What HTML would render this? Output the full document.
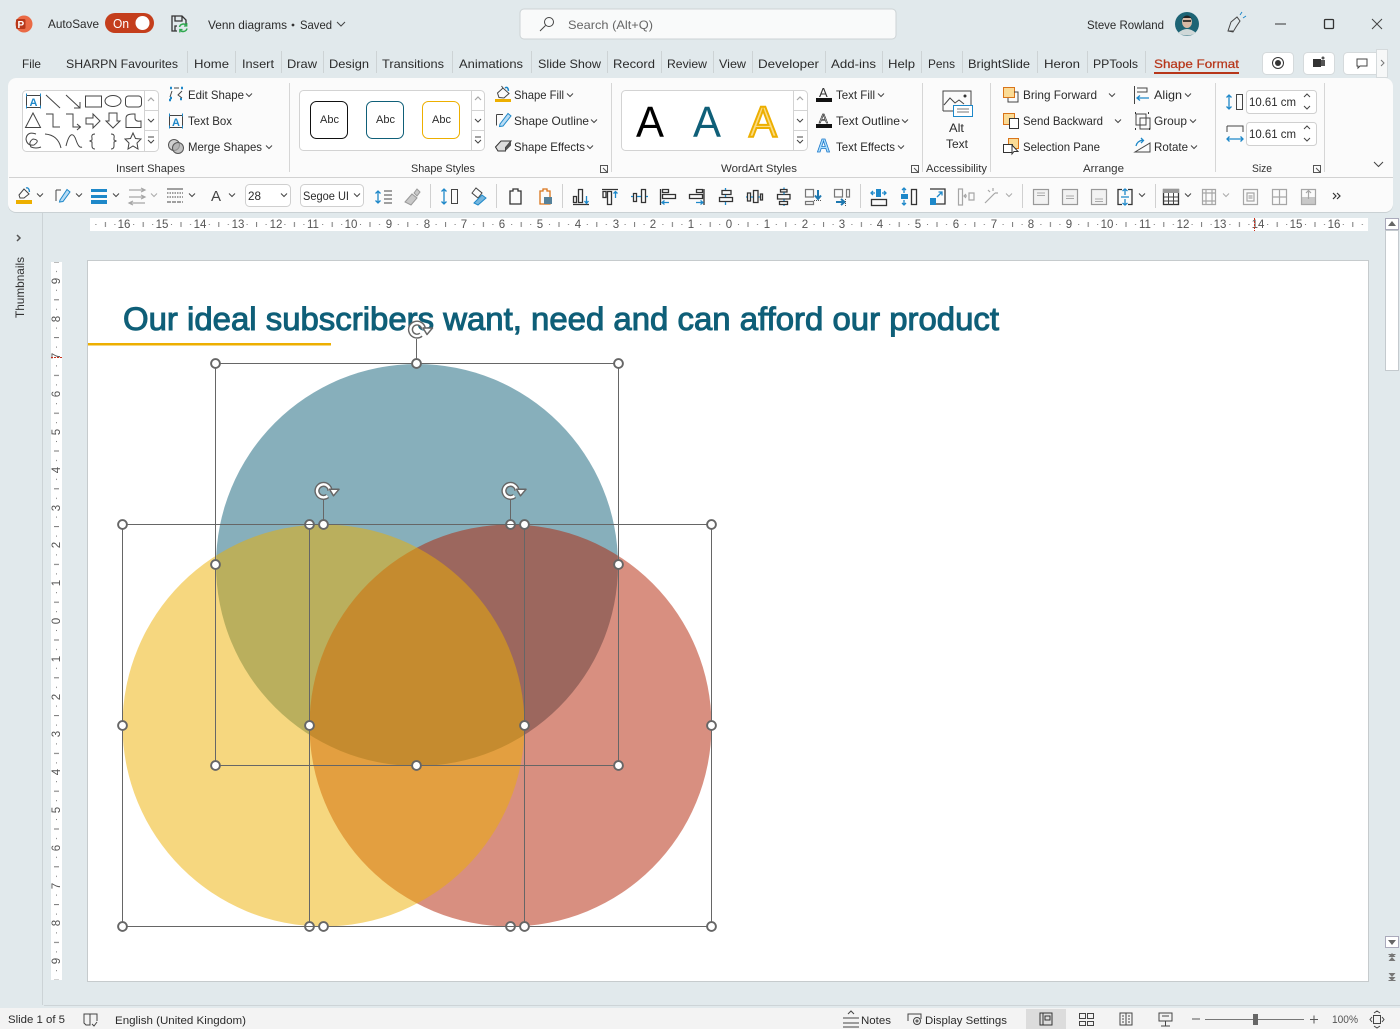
<!DOCTYPE html>
<html lang="en"><head><meta charset="utf-8"><title>Venn diagrams - PowerPoint</title>
<style>
html,body{margin:0;padding:0;width:1400px;height:1029px;overflow:hidden;background:#e1e9ec}
svg{display:block}
text{font-family:"Liberation Sans",sans-serif;font-size:12px;fill:#2b2b2b}
.k{fill:none;stroke:#444;stroke-width:1}
.b{fill:none;stroke:#1e88c9;stroke-width:1.3}
.g{fill:none;stroke:#a6a6a6;stroke-width:1.2}
.d{fill:none;stroke:#333;stroke-width:1.3}
.s{font-size:11px;fill:#333}
.r{font-size:11.5px;fill:#555}
.h{fill:#fff;stroke:#666;stroke-width:1.9}
.f{fill:none;stroke:#666;stroke-width:1}
</style></head><body>
<svg width="1400" height="1029" viewBox="0 0 1400 1029" xmlns="http://www.w3.org/2000/svg">
<defs>
<path id="c" d="M-3-1.5L0 1.5 3-1.5" fill="none" stroke="#444" stroke-width="1"/>
<path id="cg" d="M-3-1.5L0 1.5 3-1.5" fill="none" stroke="#aaa" stroke-width="1"/>
<g id="rot"><path d="M6.500 0A6.500 6.500 0 1 0 4 5.200" fill="none" stroke="#666" stroke-width="5.200"/><path d="M6.500 0A6.500 6.500 0 1 0 4 5.200" fill="none" stroke="#fff" stroke-width="2.400"/><path d="M6-1.500H15.500L10 5Z" fill="#fff" stroke="#666" stroke-width="1.500" stroke-linejoin="round"/></g>
<pattern id="hr" patternUnits="userSpaceOnUse" width="37.8" height="13" x="729" y="218"><rect x="9" y="6" width="1" height="1" fill="#777"/><rect x="18.5" y="4" width="1" height="5" fill="#777"/><rect x="28" y="6" width="1" height="1" fill="#777"/></pattern>
<pattern id="vr" patternUnits="userSpaceOnUse" width="11" height="37.8" x="51" y="621"><rect x="5" y="9" width="1" height="1" fill="#777"/><rect x="3" y="18.5" width="5" height="1" fill="#777"/><rect x="5" y="28" width="1" height="1" fill="#777"/></pattern>
</defs>

<rect width="1400" height="1029" fill="#e1e9ec"/>

<!-- title bar -->
<circle cx="24" cy="24" r="8.500" fill="#ea6a45"/><rect x="16" y="19" width="9.500" height="10" rx="1.500" fill="#b8381a"/><text x="17.500" y="28" style="font-size:10px;font-weight:bold;fill:#fff">P</text>
<text x="48" y="28" textLength="51" lengthAdjust="spacingAndGlyphs">AutoSave</text>
<rect x="105" y="13" width="49" height="20" rx="10" fill="#c43e1c"/><text x="113" y="28" textLength="16" lengthAdjust="spacingAndGlyphs" style="fill:#fff;font-size:13px">On</text><circle cx="142.500" cy="23" r="7" fill="#fff"/>
<path class="d" d="M177 31H172V16H182L186 20V25M175 16V21H182V16M175 31V26H177"/><path d="M179.500 27A4 4 0 0 1 186.500 25.500M187 28.500A4 4 0 0 1 180 30" fill="none" stroke="#2fa84f" stroke-width="1.500"/><path d="M186.800 23V26H184M179.800 32.500V29.500H182.500" fill="none" stroke="#2fa84f" stroke-width="1.200"/>
<text x="208" y="29" textLength="79" lengthAdjust="spacingAndGlyphs">Venn diagrams</text><circle cx="293" cy="25" r="1.400" fill="#333"/><text x="300" y="29" textLength="32" lengthAdjust="spacingAndGlyphs">Saved</text><path class="k" d="M337 22L341 26 345 22"/>
<rect x="520" y="9" width="376" height="30" rx="4" fill="#f9fafa" stroke="#cdd3d5"/>
<circle cx="549" cy="22" r="4.500" class="k"/><path class="k" d="M545.500 25.500L540 31"/>
<text x="568" y="29" textLength="85" lengthAdjust="spacingAndGlyphs" style="fill:#666">Search (Alt+Q)</text>
<text x="1087" y="29" textLength="77" lengthAdjust="spacingAndGlyphs">Steve Rowland</text>
<circle cx="1187" cy="24" r="12" fill="#1d6475"/><ellipse cx="1187" cy="22" rx="5" ry="6" fill="#d8b9a5"/><path d="M1181 20Q1187 11 1193 20L1191 18H1183Z" fill="#222"/><path d="M1178 33Q1187 25 1196 33Q1187 38 1178 33Z" fill="#cfd8d8"/><path d="M1183 21H1191" stroke="#111" stroke-width="1.500"/>
<path class="k" d="M1228 31L1231 22 1237 17 1240 21 1236 27 1233 32ZM1228 31H1233"/><path d="M1240 15L1242 12M1243 18L1246 16" stroke="#1e88c9" fill="none"/>
<path d="M1275 24H1286" stroke="#333"/><rect x="1324.500" y="19.500" width="9" height="9" rx="1" class="d"/><path d="M1372 19L1382 29M1382 19L1372 29" class="k"/>

<!-- tabs -->
<g>
<text x="22" y="68" textLength="19" lengthAdjust="spacingAndGlyphs">File</text>
<text x="66" y="68" textLength="112" lengthAdjust="spacingAndGlyphs">SHARPN Favourites</text>
<text x="194" y="68" textLength="35" lengthAdjust="spacingAndGlyphs">Home</text>
<text x="242" y="68" textLength="32" lengthAdjust="spacingAndGlyphs">Insert</text>
<text x="287" y="68" textLength="30" lengthAdjust="spacingAndGlyphs">Draw</text>
<text x="329" y="68" textLength="40" lengthAdjust="spacingAndGlyphs">Design</text>
<text x="382" y="68" textLength="62" lengthAdjust="spacingAndGlyphs">Transitions</text>
<text x="459" y="68" textLength="64" lengthAdjust="spacingAndGlyphs">Animations</text>
<text x="538" y="68" textLength="63" lengthAdjust="spacingAndGlyphs">Slide Show</text>
<text x="613" y="68" textLength="42" lengthAdjust="spacingAndGlyphs">Record</text>
<text x="667" y="68" textLength="40" lengthAdjust="spacingAndGlyphs">Review</text>
<text x="719" y="68" textLength="27" lengthAdjust="spacingAndGlyphs">View</text>
<text x="758" y="68" textLength="61" lengthAdjust="spacingAndGlyphs">Developer</text>
<text x="831" y="68" textLength="45" lengthAdjust="spacingAndGlyphs">Add-ins</text>
<text x="888" y="68" textLength="27" lengthAdjust="spacingAndGlyphs">Help</text>
<text x="928" y="68" textLength="27" lengthAdjust="spacingAndGlyphs">Pens</text>
<text x="968" y="68" textLength="62" lengthAdjust="spacingAndGlyphs">BrightSlide</text>
<text x="1044" y="68" textLength="36" lengthAdjust="spacingAndGlyphs">Heron</text>
<text x="1093" y="68" textLength="45" lengthAdjust="spacingAndGlyphs">PPTools</text>
<text x="1154" y="68" textLength="85" lengthAdjust="spacingAndGlyphs" style="fill:#b7361a;stroke:#b7361a;stroke-width:.25">Shape Format</text>
</g>
<rect x="1154" y="72" width="85" height="2" fill="#b7361a"/>
<path stroke="#cdd3d5" d="M187.500 51V73M235.500 51V73M281.500 51V73M323.500 51V73M376.500 51V73M452.500 51V73M531.500 51V73M607.500 51V73M661.500 51V73M713.500 51V73M752.500 51V73M825.500 51V73M882.500 51V73M921.500 51V73M962.500 51V73M1037.500 51V73M1087.500 51V73M1145.500 51V73"/>
<rect x="1262.500" y="52.500" width="31" height="22" rx="4" fill="#fff" stroke="#d5dadc"/><circle cx="1278" cy="63" r="5.500" fill="none" stroke="#333"/><circle cx="1278" cy="63" r="3" fill="#333"/>
<rect x="1303.500" y="52.500" width="31" height="22" rx="4" fill="#fff" stroke="#d5dadc"/><rect x="1313" y="59" width="8" height="8" fill="#333"/><rect x="1321" y="60" width="4" height="6" fill="#555"/><circle cx="1323" cy="58" r="1.500" fill="#555"/>
<rect x="1343.500" y="52.500" width="36" height="22" rx="4" fill="#fff" stroke="#d5dadc"/><path class="k" d="M1357 59H1367V66H1360L1358 68V66H1357Z"/>
<rect x="1376.500" y="49.500" width="11" height="28" fill="#f7f8f8" stroke="#d5dadc"/><path d="M1381 60L1384 63 1381 66" fill="none" stroke="#777"/>

<!-- ribbon -->
<rect x="8" y="78" width="1385" height="135" rx="8" fill="#000" opacity=".1"/>
<rect x="8" y="78" width="1385" height="134" rx="8" fill="#fbfbfb"/>
<rect x="9" y="177" width="1384" height="1" fill="#d2d2d2"/>
<path stroke="#d6d6d6" d="M289.500 83V172M611.500 83V172M922.500 83V172M990.500 83V172M1215.500 83V172M1324.500 83V172"/>
<text class="s" x="116" y="172" textLength="69" lengthAdjust="spacingAndGlyphs">Insert Shapes</text>
<text class="s" x="411" y="172" textLength="64" lengthAdjust="spacingAndGlyphs">Shape Styles</text>
<text class="s" x="721" y="172" textLength="76" lengthAdjust="spacingAndGlyphs">WordArt Styles</text>
<text class="s" x="926" y="172" textLength="61" lengthAdjust="spacingAndGlyphs">Accessibility</text>
<text class="s" x="1083" y="172" textLength="41" lengthAdjust="spacingAndGlyphs">Arrange</text>
<text class="s" x="1252" y="172" textLength="20" lengthAdjust="spacingAndGlyphs">Size</text>
<path d="M600.500 165.500H607.500V172.500H600.500ZM603 168L607.500 172.500M911.500 165.500H918.500V172.500H911.500ZM914 168L918.500 172.500M1313.500 165.500H1320.500V172.500H1313.500ZM1316 168L1320.500 172.500" fill="none" stroke="#555"/>
<path class="k" d="M1374 162L1378.500 166.500 1383 162"/>

<!-- insert shapes gallery -->
<rect x="22.500" y="90.500" width="136" height="61" rx="4" fill="#fff" stroke="#d3d3d3"/>
<path stroke="#d3d3d3" d="M144.500 91V151M145 110.500H158M145 130.500H158"/>
<path class="g" d="M148 101L151 98 154 101"/><path class="k" d="M148 119L151 122 154 119M148 137H154M148 140L151 143 154 140"/>
<rect x="26.500" y="95.500" width="14" height="12" class="k"/><path d="M26 95h1M40 95h1M26 107h1M40 107h1" stroke="#1e88c9" stroke-width="3"/><text x="29.500" y="106" style="font-size:11px;font-weight:bold;fill:#1e88c9">A</text>
<g class="k">
<path d="M46 95L60 108"/><path d="M66 95L80 108M80 102V108H74"/><rect x="85.500" y="96" width="16" height="11"/><ellipse cx="113" cy="101" rx="8" ry="5.500"/><rect x="125.500" y="96" width="16" height="11" rx="3"/>
<path d="M33 113L25.500 127.500H40.500Z"/><path d="M46 114H53V127H60"/><path d="M66 114H73V127H80M77 124L80.500 127 77 130"/><path d="M86 118H93V114L100 121 93 128V124H86Z"/><path d="M109 113H117V121H120L113 128 106 121H109Z"/><path d="M126 127.500V118Q126 114 133 114H135V118Q135 122 141 121V127.500Z"/>
<path d="M36 134Q27 131 26 139 27 146 34 145 41 140 33 139 28 142 31 147 36 149 41 147"/><path d="M45 134Q58 135 61 148"/><path d="M66 146C70 130 74 134 76 140S80 148 82 147"/><path d="M95 134Q91 134 92 138V140L90 141 92 142V146Q92 149 95 149"/><path d="M111 134Q115 134 114 138V140L116 141 114 142V146Q114 149 111 149"/><path d="M133 133L135.500 138.500 141 139 137 143 138 149 133 146 128 149 129 143 125 139 130.500 138.500Z"/>
</g>
<path d="M170 98h2M169 100h2M181 88h2M170 88h2M180 99h2" stroke="#1e88c9" stroke-width="2.500"/><path class="k" d="M170 97L172 91M174 88H179M182 91L178 95 182 98"/>
<text x="188" y="99" textLength="56" lengthAdjust="spacingAndGlyphs">Edit Shape</text><use href="#c" x="249" y="95"/>
<rect x="169.500" y="115.500" width="13" height="12" class="k"/><path d="M169 115h1M182 115h1M169 127h1M182 127h1" stroke="#1e88c9" stroke-width="3"/><text x="172" y="126" style="font-size:11px;font-weight:bold;fill:#1e88c9">A</text>
<text x="188" y="125" textLength="44" lengthAdjust="spacingAndGlyphs">Text Box</text>
<circle cx="174" cy="145" r="5.500" fill="#d0d0d0" stroke="#555"/><circle cx="178" cy="148" r="5.500" fill="#aaa" fill-opacity=".7" stroke="#555"/>
<text x="188" y="151" textLength="74" lengthAdjust="spacingAndGlyphs">Merge Shapes</text><use href="#c" x="269" y="147"/>

<!-- shape styles -->
<rect x="299.500" y="90.500" width="185" height="60" rx="4" fill="#fff" stroke="#d3d3d3"/>
<path stroke="#d3d3d3" d="M471.500 91V150M472 110.500H484M472 130.500H484"/>
<path class="g" d="M475 100L478 97 481 100"/><path class="k" d="M475 119L478 122 481 119M475 137H481M475 140L478 143 481 140"/>
<rect x="310.500" y="101.500" width="37" height="37" rx="6" fill="#fff" stroke="#111"/><rect x="366.500" y="101.500" width="37" height="37" rx="6" fill="#fff" stroke="#0f5f78"/><rect x="422.500" y="101.500" width="37" height="37" rx="6" fill="#fff" stroke="#edaf00"/>
<text x="320" y="123" textLength="19" lengthAdjust="spacingAndGlyphs" style="font-size:11px">Abc</text><text x="376" y="123" textLength="19" lengthAdjust="spacingAndGlyphs" style="font-size:11px">Abc</text><text x="432" y="123" textLength="19" lengthAdjust="spacingAndGlyphs" style="font-size:11px">Abc</text>
<rect x="495" y="99" width="16" height="3" fill="#edaf00"/><path class="k" d="M497.500 93L503 88 509 93.500 504 98 499 97.500ZM503 88L501.500 86"/><path d="M505 88Q508 86 508.500 91" fill="none" stroke="#1e88c9" stroke-width="1.500"/>
<path class="k" d="M496.500 114.500H503M496.500 114.500V125.500M496.500 122.500V114.500"/><path d="M500 124L508 113.500 511 116 503 126 499.500 126.500Z" fill="#b8dcf5" stroke="#1e88c9"/>
<text x="514" y="99" textLength="50" lengthAdjust="spacingAndGlyphs">Shape Fill</text><use href="#c" x="570" y="95"/>
<text x="514" y="125" textLength="75" lengthAdjust="spacingAndGlyphs">Shape Outline</text><use href="#c" x="594" y="121"/>
<path d="M495.500 147L501 141H511L505.500 147.500V151H498Z" fill="#ddd" stroke="#333"/><path d="M505.500 147.500L511 141V145.500L505.500 151Z" fill="#555"/>
<text x="514" y="151" textLength="71" lengthAdjust="spacingAndGlyphs">Shape Effects</text><use href="#c" x="590" y="147"/>

<!-- wordart -->
<rect x="621.500" y="90.500" width="186" height="60" rx="4" fill="#fff" stroke="#d3d3d3"/>
<path stroke="#d3d3d3" d="M793.500 91V150M794 110.500H807M794 130.500H807"/>
<path class="g" d="M797 100L800 97 803 100"/><path class="k" d="M797 119L800 122 803 119M797 137H803M797 140L800 143 803 140"/>
<text x="636" y="137" style="font-size:44px;fill:#000" textLength="28" lengthAdjust="spacingAndGlyphs">A</text>
<text x="693" y="137" style="font-size:44px;fill:#0f5f78" textLength="28" lengthAdjust="spacingAndGlyphs">A</text>
<text x="749" y="137" style="font-size:44px;fill:#fbdb83;stroke:#edaf00;stroke-width:2" textLength="28" lengthAdjust="spacingAndGlyphs">A</text>
<rect x="816" y="98" width="16" height="4" fill="#111"/><text x="819" y="97" style="font-size:13px;fill:#333">A</text>
<text x="836" y="99" textLength="39" lengthAdjust="spacingAndGlyphs">Text Fill</text><use href="#c" x="881" y="95"/>
<rect x="816" y="124" width="16" height="4" fill="#111"/><text x="819" y="123" style="font-size:13px;fill:#fff;stroke:#333;stroke-width:.7">A</text>
<text x="836" y="125" textLength="64" lengthAdjust="spacingAndGlyphs">Text Outline</text><use href="#c" x="905" y="121"/>
<text x="817" y="152" style="font-size:18px;font-weight:bold;fill:#ace0ff;stroke:#1e78c9;stroke-width:.8">A</text>
<text x="836" y="151" textLength="59" lengthAdjust="spacingAndGlyphs">Text Effects</text><use href="#c" x="901" y="147"/>

<!-- alt text -->
<path class="k" d="M943 111V91H971V105M943 111H953"/><path class="k" d="M944 105L950 98 955 103 959 100 964 104"/><circle cx="965" cy="96" r="1.500" fill="#333"/>
<rect x="953.500" y="105.500" width="19" height="11" fill="#fff" stroke="#1e88c9"/><path d="M957 109H969M957 112H969" stroke="#777"/>
<text x="949" y="132" textLength="15" lengthAdjust="spacingAndGlyphs">Alt</text><text x="946" y="148" textLength="22" lengthAdjust="spacingAndGlyphs">Text</text>

<!-- arrange -->
<rect x="1003.500" y="87.500" width="11" height="10" fill="#fbdb95" stroke="#d9741a"/><path class="k" d="M1014 92H1018V102H1008V98"/>
<text x="1023" y="99" textLength="74" lengthAdjust="spacingAndGlyphs">Bring Forward</text><use href="#c" x="1112" y="95"/>
<rect x="1003.500" y="113.500" width="11" height="11" fill="#fbdb95" stroke="#d9741a"/><rect x="1009.500" y="118.500" width="9" height="10" fill="#fff" stroke="#333"/>
<text x="1023" y="125" textLength="80" lengthAdjust="spacingAndGlyphs">Send Backward</text><use href="#c" x="1118" y="121"/>
<rect x="1008.500" y="138.500" width="10" height="10" fill="#fbdb95" stroke="#d9741a"/><rect x="1003.500" y="144.500" width="9" height="8" fill="#fff" stroke="#333"/><path d="M1012 145V154L1014 151.500H1018Z" fill="#fff" stroke="#333"/>
<text x="1023" y="151" textLength="77" lengthAdjust="spacingAndGlyphs">Selection Pane</text>
<path class="k" d="M1134.500 86V104M1137 88H1147V92H1137"/><path class="b" d="M1149 98H1137M1140 95.500L1137 98 1140 100.500"/>
<text x="1154" y="99" textLength="28" lengthAdjust="spacingAndGlyphs">Align</text><use href="#c" x="1188" y="95"/>
<path class="k" d="M1136 114H1146V125H1136ZM1140 118H1150V129H1140Z"/><path d="M1135 113h1M1148 113h1M1135 129h1M1149 129h1" stroke="#333" stroke-width="2"/>
<text x="1154" y="125" textLength="33" lengthAdjust="spacingAndGlyphs">Group</text><use href="#c" x="1193" y="121"/>
<path class="k" d="M1135 152L1150 143V152Z"/><path class="b" d="M1136 146Q1137 141 1143 140M1141 138L1143.500 140.500 1141 143"/>
<text x="1154" y="151" textLength="34" lengthAdjust="spacingAndGlyphs">Rotate</text><use href="#c" x="1194" y="147"/>

<!-- size -->
<rect x="1236.500" y="94.500" width="6" height="15" class="k"/><path class="b" d="M1229 95V109M1226.500 97.500L1229 95 1231.500 97.500M1226.500 106.500L1229 109 1231.500 106.500"/>
<rect x="1246.500" y="90.500" width="70" height="23" rx="3" fill="#fff" stroke="#d0d0d0"/><text x="1249" y="106" textLength="47" lengthAdjust="spacingAndGlyphs">10.61 cm</text>
<path class="k" d="M1304 97L1307 94 1310 97M1304 106L1307 109 1310 106"/>
<path class="k" d="M1227 126H1243V132M1227 126V132"/><path class="b" d="M1227 139H1243M1229.500 136.500L1227 139 1229.500 141.500M1240.500 136.500L1243 139 1240.500 141.500"/>
<rect x="1246.500" y="122.500" width="70" height="23" rx="3" fill="#fff" stroke="#d0d0d0"/><text x="1249" y="138" textLength="47" lengthAdjust="spacingAndGlyphs">10.61 cm</text>
<path class="k" d="M1304 129L1307 126 1310 129M1304 138L1307 141 1310 138"/>

<!-- QAT -->
<path stroke="#d0d0d0" d="M430.500 184V208M496.500 184V208M562.500 184V208M860.500 184V208M1022.500 184V208M1155.500 184V208"/>
<rect x="16" y="200" width="16" height="4" fill="#edaf00"/><path class="k" d="M19 195L24 189 29 194 24 198H20Z"/><path d="M26 188Q29 187 29.500 192" fill="none" stroke="#1e88c9" stroke-width="1.300"/>
<use href="#c" x="40" y="195"/>
<path class="k" d="M56 190H61M56 190V201"/><path d="M60 200L67 189.500 70 192 63 201.500 59.500 202Z" fill="#b8dcf5" stroke="#1e88c9"/><use href="#c" x="79" y="195"/>
<rect x="91" y="189" width="16" height="3" fill="#1e88c9"/><rect x="91" y="195" width="16" height="3" fill="#1e88c9"/><rect x="91" y="200" width="16" height="4" fill="#1e88c9"/><use href="#c" x="116" y="195"/>
<path class="g" d="M129 190H145M141 188L145 190 141 192M129 197H145M141 195L145 197 141 199M129 203H145M133 201L129 203 133 205"/><use href="#cg" x="154" y="195"/>
<path class="k" d="M167 189H183"/><path class="k" d="M167 193H183M167 197H183" stroke-dasharray="1.500 1"/><path class="k" d="M167 202H183" stroke-dasharray="4 1"/><use href="#c" x="192" y="195"/>
<text x="211" y="201" style="font-size:15px;fill:#444">A</text><use href="#c" x="232" y="195"/>
<rect x="245.500" y="184.500" width="45" height="22" rx="4" fill="#fff" stroke="#cfcfcf"/><text x="248" y="200" textLength="13" lengthAdjust="spacingAndGlyphs">28</text><use href="#c" x="284" y="195"/>
<rect x="300.500" y="184.500" width="63" height="22" rx="4" fill="#fff" stroke="#cfcfcf"/><text x="303" y="200" textLength="46" lengthAdjust="spacingAndGlyphs">Segoe UI</text><use href="#c" x="357" y="195"/>
<path class="b" d="M378 191V203M375.500 193.500L378 191 380.500 193.500M375.500 200.500L378 203 380.500 200.500"/><path class="k" d="M384 191H392M384 195H392M384 199H392M384 203H392"/>
<path d="M405 202L412 194 417 198 411 205ZM414 193L417 189 420 192 417 196Z" fill="#c8c8c8" stroke="#999"/>
<rect x="451.500" y="189.500" width="6" height="14" class="k"/><path class="b" d="M444 189V204M441.500 191.500L444 189 446.500 191.500M441.500 201.500L444 204 446.500 201.500"/>
<path class="k" d="M472 193L476 188 482 193 478 198Z"/><path d="M474 203L482 195 486 198 478 205Z" fill="#1e88c9" fill-opacity=".6" stroke="#1e88c9"/>
<path class="d" d="M510 191H513V189H518V191H521V204H510Z"/>
<path d="M540 191H543V189H547V191H550V204H540Z" fill="none" stroke="#d9741a" stroke-width="1.300"/><rect x="544" y="197" width="8" height="7" fill="#55819a"/>

<g class="d">
<path d="M573.500 196.500H576.500V202.500H573.500ZM578.500 189.500H582.500V202.500H578.500ZM573 204.500H589"/>
<path d="M602 189.500H618M603 191.500H606V197.500H603ZM607.500 191.500H611.500V204.500H607.500Z"/>
<path d="M633.500 193.500H636.500V201.500H633.500ZM641.500 189.500H645.500V202.500H641.500Z"/>
<path d="M660.500 189V205M662.500 189.500H668.500V192.500H662.500ZM662.500 194.500H675.500V198.500H662.500Z"/>
<path d="M704 189V205M696.500 189.500H702.500V192.500H696.500ZM689.500 194.500H702.500V198.500H689.500Z"/>
<path d="M722 190.500H731V194.500H722ZM719.500 197.500H732.500V201.500H719.500Z"/>
<path d="M747.500 193H750.500V201H747.500ZM753.500 190.500H758V202.500H753.500ZM760.500 194H762.500V200H760.500Z"/>
<path d="M780.500 189.500H787V192H780.500ZM777.500 194.500H790V199H777.500ZM779.500 201.500H787.500V204.500H779.500Z"/>
</g>
<g class="b">
<path d="M586.500 196V203M584.500 201L586.500 203.500 588.500 201"/>
<path d="M615.500 191.500V198M613.500 193.500L615.500 191.500 617.500 193.500"/>
<path d="M631 196.500H633M637 196.500H641M646 196.500H648"/>
<path d="M662 202.500H669M664.500 200.500L662 202.500 664.500 204.500"/>
<path d="M696 202.500H703M700.500 200.500L703 202.500 700.500 204.500"/>
<path d="M725.500 188V190M725.500 195V197M725.500 202V205"/>
<path d="M746 197H747M751 197H753M758.500 197H760"/>
<path d="M784 187.500V189M784 192.500V194.500M784 199.500V201M784 205V206"/>
</g>
<path d="M805.500 189.500H813.500V197H805.500ZM805.500 201.500H813.500V204.500H805.500ZM834.500 189.500H842.500V197H834.500ZM846.500 189.500H849.500V197H846.500Z" fill="none" stroke="#777" stroke-width="1.200"/>
<path d="M818 190V198M815 195.500L818 199 821 195.500M836 202H844M841 199L844.500 202 841 205" fill="none" stroke="#1e78b0" stroke-width="2"/>
<path d="M814 200.500H822M845.500 199V206" stroke="#555" stroke-dasharray="1 1" fill="none"/>

<rect x="871.500" y="199.500" width="15" height="6" class="d"/><rect x="876" y="189" width="5" height="8" fill="#1e88c9"/><path class="b" d="M871 193H875M886 193H882M873 191L871 193 873 195M884 191L886 193 884 195"/>
<rect x="911.500" y="189.500" width="5" height="15" class="d"/><rect x="901" y="194" width="7" height="5" fill="#1e88c9"/><path class="b" d="M904 188V193M904 200V205M902 190L904 188 906 190M902 203L904 205 906 203"/>
<path class="d" d="M930 189H945V204H935"/><rect x="930" y="198" width="6" height="7" fill="#1e88c9"/><path class="b" d="M937 197L942 192M938.500 192H942V195.500"/>
<path class="g" d="M958.500 189H962.500V205H958.500ZM969 193H974V200H969Z"/><path class="g" d="M967 196H964M966 194L964 196 966 198"/>
<path class="g" d="M985 203L995 193"/><path class="g" d="M993 188V191M998 193H995M988 190L990 192"/><use href="#cg" x="1009" y="195"/>
<g fill="#f2f2f2" stroke="#999" stroke-width="1.200"><rect x="1033.500" y="189.500" width="15" height="15"/><rect x="1062.500" y="189.500" width="15" height="15"/><rect x="1091.500" y="189.500" width="15" height="15"/></g>
<path stroke="#aaa" d="M1037 193H1045M1037 195.500H1045M1066 196H1074M1066 198.500H1074M1095 199H1103M1095 201.500H1103"/>
<path class="d" d="M1122 189.500H1118V204.500H1122M1128 189.500H1132V204.500H1128"/><path class="b" d="M1125 189V195M1125 199V205M1122.500 191L1125 189 1127.500 191M1122.500 203L1125 205 1127.500 203M1121 197H1129"/><use href="#c" x="1142" y="195"/>
<rect x="1163.500" y="189.500" width="15" height="15" class="d"/><rect x="1163" y="189" width="16" height="4" fill="#999"/><path class="k" d="M1164 197H1178M1164 201H1178M1168.500 193V205M1173.500 193V205"/><use href="#c" x="1188" y="195"/>
<path class="g" d="M1202.500 189.500H1215.500V204.500H1202.500ZM1206 190V204M1212 190V204M1203 193H1215M1203 201H1215"/><use href="#cg" x="1226" y="195"/>
<path class="g" d="M1243.500 189.500H1257.500V204.500H1243.500ZM1247 193H1254V201H1247ZM1248.500 196H1252.500M1248.500 198H1252.500"/>
<path class="g" d="M1272.500 189.500H1286.500V204.500H1272.500ZM1273 197H1286M1279.500 190V197M1279.500 197V204"/>
<rect x="1301.500" y="197" width="14" height="8" fill="#c8c8c8"/><path class="g" d="M1301.500 189.500H1315.500V204.500H1301.500ZM1308.500 199V191M1306 193L1308.500 190.500 1311 193"/>
<path d="M1333 193L1336 196 1333 199M1337 193L1340 196 1337 199" fill="none" stroke="#333" stroke-width="1.200"/>

<!-- sidebar -->
<rect x="42" y="213" width="1" height="792" fill="#ccd3d6"/>
<path d="M17 235L20 238 17 241" fill="none" stroke="#555" stroke-width="1.500"/>
<text transform="translate(24,318) rotate(-90)" textLength="61" lengthAdjust="spacingAndGlyphs" style="fill:#333">Thumbnails</text>

<!-- horizontal ruler -->
<rect x="90" y="218" width="1278" height="13" fill="#fff"/><rect x="90" y="218" width="1278" height="13" fill="url(#hr)"/>
<g>
<text class="r" x="124" y="228" text-anchor="middle">16</text><text class="r" x="162" y="228" text-anchor="middle">15</text><text class="r" x="200" y="228" text-anchor="middle">14</text><text class="r" x="238" y="228" text-anchor="middle">13</text><text class="r" x="276" y="228" text-anchor="middle">12</text><text class="r" x="313" y="228" text-anchor="middle">11</text><text class="r" x="351" y="228" text-anchor="middle">10</text><text class="r" x="389" y="228" text-anchor="middle">9</text><text class="r" x="427" y="228" text-anchor="middle">8</text><text class="r" x="464" y="228" text-anchor="middle">7</text><text class="r" x="502" y="228" text-anchor="middle">6</text><text class="r" x="540" y="228" text-anchor="middle">5</text><text class="r" x="578" y="228" text-anchor="middle">4</text><text class="r" x="616" y="228" text-anchor="middle">3</text><text class="r" x="653" y="228" text-anchor="middle">2</text><text class="r" x="691" y="228" text-anchor="middle">1</text><text class="r" x="729" y="228" text-anchor="middle">0</text><text class="r" x="767" y="228" text-anchor="middle">1</text><text class="r" x="805" y="228" text-anchor="middle">2</text><text class="r" x="842" y="228" text-anchor="middle">3</text><text class="r" x="880" y="228" text-anchor="middle">4</text><text class="r" x="918" y="228" text-anchor="middle">5</text><text class="r" x="956" y="228" text-anchor="middle">6</text><text class="r" x="994" y="228" text-anchor="middle">7</text><text class="r" x="1031" y="228" text-anchor="middle">8</text><text class="r" x="1069" y="228" text-anchor="middle">9</text><text class="r" x="1107" y="228" text-anchor="middle">10</text><text class="r" x="1145" y="228" text-anchor="middle">11</text><text class="r" x="1183" y="228" text-anchor="middle">12</text><text class="r" x="1220" y="228" text-anchor="middle">13</text><text class="r" x="1258" y="228" text-anchor="middle">14</text><text class="r" x="1296" y="228" text-anchor="middle">15</text><text class="r" x="1334" y="228" text-anchor="middle">16</text>
</g>
<path d="M1254.500 218V231" stroke="#c8321e" stroke-dasharray="2 1"/>

<!-- vertical ruler -->
<rect x="51" y="262" width="11" height="718" fill="#fff"/><rect x="51" y="262" width="11" height="718" fill="url(#vr)"/>
<g>
<text class="r" transform="translate(60,281) rotate(-90)" text-anchor="middle">9</text><text class="r" transform="translate(60,319) rotate(-90)" text-anchor="middle">8</text><text class="r" transform="translate(60,356) rotate(-90)" text-anchor="middle">7</text><text class="r" transform="translate(60,394) rotate(-90)" text-anchor="middle">6</text><text class="r" transform="translate(60,432) rotate(-90)" text-anchor="middle">5</text><text class="r" transform="translate(60,470) rotate(-90)" text-anchor="middle">4</text><text class="r" transform="translate(60,508) rotate(-90)" text-anchor="middle">3</text><text class="r" transform="translate(60,545) rotate(-90)" text-anchor="middle">2</text><text class="r" transform="translate(60,583) rotate(-90)" text-anchor="middle">1</text><text class="r" transform="translate(60,621) rotate(-90)" text-anchor="middle">0</text><text class="r" transform="translate(60,659) rotate(-90)" text-anchor="middle">1</text><text class="r" transform="translate(60,697) rotate(-90)" text-anchor="middle">2</text><text class="r" transform="translate(60,734) rotate(-90)" text-anchor="middle">3</text><text class="r" transform="translate(60,772) rotate(-90)" text-anchor="middle">4</text><text class="r" transform="translate(60,810) rotate(-90)" text-anchor="middle">5</text><text class="r" transform="translate(60,848) rotate(-90)" text-anchor="middle">6</text><text class="r" transform="translate(60,886) rotate(-90)" text-anchor="middle">7</text><text class="r" transform="translate(60,923) rotate(-90)" text-anchor="middle">8</text><text class="r" transform="translate(60,961) rotate(-90)" text-anchor="middle">9</text>
</g>
<path d="M51 357.500H62" stroke="#c8321e" stroke-dasharray="2 1"/>

<!-- slide -->
<rect x="87.500" y="260.500" width="1281" height="721" fill="#fff" stroke="#c6cbcd"/>
<text x="123" y="330" textLength="876" lengthAdjust="spacingAndGlyphs" style="font-size:32px;fill:#0f5f78;stroke:#0f5f78;stroke-width:1">Our ideal subscribers want, need and can afford our product</text>
<rect x="88" y="343" width="243" height="2.500" fill="#edaf00"/>

<!-- venn -->
<circle cx="417" cy="565" r="201" fill="#0f5f78" opacity=".5"/>
<circle cx="510.500" cy="725.500" r="201" fill="#b11f01" opacity=".5"/>
<circle cx="323.500" cy="725.500" r="201" fill="#edaf00" opacity=".5"/>

<!-- selection: teal -->
<rect x="215.500" y="363.500" width="403" height="402" class="f"/><path class="f" d="M416.500 363V339"/>
<use href="#rot" x="417" y="329.500"/>
<g class="h"><circle cx="215.500" cy="363.500" r="4.400"/><circle cx="416.500" cy="363.500" r="4.400"/><circle cx="618.500" cy="363.500" r="4.400"/><circle cx="215.500" cy="564.500" r="4.400"/><circle cx="618.500" cy="564.500" r="4.400"/><circle cx="215.500" cy="765.500" r="4.400"/><circle cx="416.500" cy="765.500" r="4.400"/><circle cx="618.500" cy="765.500" r="4.400"/></g>
<!-- selection: red -->
<rect x="309.500" y="524.500" width="402" height="402" class="f"/><path class="f" d="M510.500 524V500"/>
<use href="#rot" x="510.500" y="490.800"/>
<g class="h"><circle cx="309.500" cy="524.500" r="4.400"/><circle cx="510.500" cy="524.500" r="4.400"/><circle cx="711.500" cy="524.500" r="4.400"/><circle cx="309.500" cy="725.500" r="4.400"/><circle cx="711.500" cy="725.500" r="4.400"/><circle cx="309.500" cy="926.500" r="4.400"/><circle cx="510.500" cy="926.500" r="4.400"/><circle cx="711.500" cy="926.500" r="4.400"/></g>
<!-- selection: yellow -->
<rect x="122.500" y="524.500" width="402" height="402" class="f"/><path class="f" d="M323.500 524V500"/>
<use href="#rot" x="323.500" y="490.800"/>
<g class="h"><circle cx="122.500" cy="524.500" r="4.400"/><circle cx="323.500" cy="524.500" r="4.400"/><circle cx="524.500" cy="524.500" r="4.400"/><circle cx="122.500" cy="725.500" r="4.400"/><circle cx="524.500" cy="725.500" r="4.400"/><circle cx="122.500" cy="926.500" r="4.400"/><circle cx="323.500" cy="926.500" r="4.400"/><circle cx="524.500" cy="926.500" r="4.400"/></g>

<!-- scrollbar -->
<rect x="1385.500" y="218.500" width="13" height="11" fill="#fff" stroke="#aab"/><path d="M1388 226L1392 221 1396 226Z" fill="#666"/>
<rect x="1385.500" y="230.500" width="13" height="140" fill="#fff" stroke="#c4cace"/>
<rect x="1385.500" y="936.500" width="13" height="11" fill="#fff" stroke="#aab"/><path d="M1388 940L1392 945 1396 940Z" fill="#666"/>
<path d="M1392 953L1388.500 957H1395.500ZM1392 957L1388.500 961H1395.500Z" fill="#777"/><rect x="1388.500" y="954" width="7" height="1" fill="#777"/>
<path d="M1392 981L1388.500 977H1395.500ZM1392 977L1388.500 973H1395.500Z" fill="#777"/><rect x="1388.500" y="980" width="7" height="1" fill="#777"/>

<!-- status bar -->
<rect x="44" y="1005" width="1356" height="1" fill="#cdd4d7"/>
<rect x="0" y="1008" width="1400" height="21" fill="#f3f3f3"/>
<text x="8" y="1023" textLength="57" lengthAdjust="spacingAndGlyphs" style="font-size:11px">Slide 1 of 5</text>
<path class="k" d="M84 1014H90V1025H86L84 1023ZM90 1014H97V1021M90 1016V1025M92 1024L94 1026 97 1022"/>
<text x="115" y="1024" textLength="131" lengthAdjust="spacingAndGlyphs" style="font-size:11px">English (United Kingdom)</text>
<path class="k" d="M843 1018H859M843 1023H859M843 1027H859M848 1014L851 1011 854 1014"/>
<text x="861" y="1024" textLength="30" lengthAdjust="spacingAndGlyphs" style="font-size:11px">Notes</text>
<path class="k" d="M908 1021V1014H921V1019"/><circle cx="917" cy="1021" r="3.500" class="k"/><circle cx="917" cy="1021" r="1" class="k"/>
<text x="925" y="1024" textLength="82" lengthAdjust="spacingAndGlyphs" style="font-size:11px">Display Settings</text>
<rect x="1026" y="1009" width="40" height="20" fill="#dcdcdc"/>
<path class="d" d="M1040 1013H1052V1025H1040ZM1043 1013V1025M1045 1016H1050V1020H1045Z" style="stroke-width:1"/>
<path class="k" d="M1079.500 1013.500H1085.500V1018.500H1079.500ZM1087.500 1013.500H1093.500V1018.500H1087.500ZM1079.500 1021.500H1085.500V1025.500H1079.500ZM1087.500 1021.500H1093.500V1025.500H1087.500Z"/>
<path class="k" d="M1120 1013H1132V1025H1120ZM1126 1013V1025M1122 1016H1124M1122 1019H1124M1122 1022H1124M1128 1016H1130M1128 1019H1130M1128 1022H1130"/>
<path class="k" d="M1159 1013H1172V1021H1159ZM1165.500 1021V1026M1161 1026H1170M1162 1016H1169"/>
<path d="M1192 1019H1200" stroke="#555"/>
<path d="M1205 1019.500H1304" stroke="#777"/><rect x="1253" y="1014" width="5" height="11" fill="#666"/>
<path d="M1310 1019.500H1318M1314 1015.500V1023.500" stroke="#555"/>
<text x="1332" y="1023" textLength="26" lengthAdjust="spacingAndGlyphs" style="font-size:11px;fill:#555">100%</text>
<rect x="1373.500" y="1015.500" width="7" height="8" fill="none" stroke="#444"/><path class="k" d="M1374 1013L1377 1011 1380 1013M1374 1026L1377 1028 1380 1026M1372 1017L1370 1019.500 1372 1022M1382 1017L1384 1019.500 1382 1022"/>
</svg>
</body></html>
